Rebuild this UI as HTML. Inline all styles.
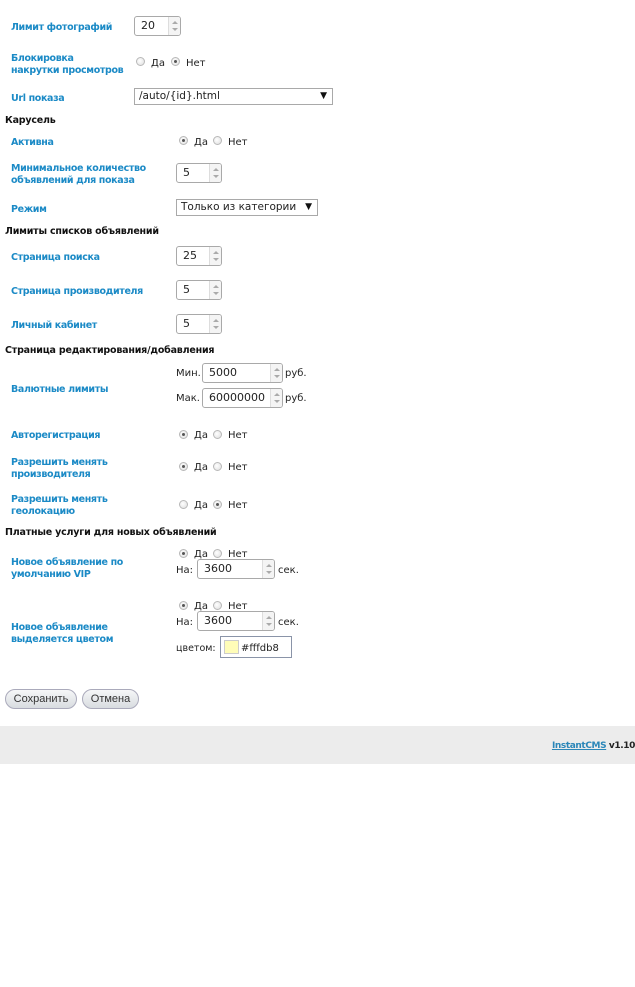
<!DOCTYPE html>
<html><head><meta charset="utf-8"><style>
*{margin:0;padding:0;box-sizing:border-box}
body{width:635px;height:987px;background:#fff;position:relative;font-family:"DejaVu Sans","Liberation Sans",sans-serif;font-size:10px;color:#222;overflow:hidden}
.a{position:absolute;white-space:nowrap;line-height:12px;margin-top:2px}
.l{color:#1b8ac6;font-weight:bold;font-size:9.5px;letter-spacing:-0.35px}
.h{font-weight:bold;color:#111;font-size:9.5px;letter-spacing:-0.2px}
.inp{position:absolute;border:1px solid #a9a9a9;border-radius:3px;background:#fff;font-size:11px;line-height:18px;padding-left:6px;overflow:hidden}
.inp .sp{position:absolute;right:0;top:0;bottom:0;width:12px;border-left:1px solid #ddd;background:#f4f4f4}
.inp .sp:before{content:"";position:absolute;left:3px;top:4px;border:3px solid transparent;border-bottom:3px solid #aaa;border-top:0}
.inp .sp:after{content:"";position:absolute;left:3px;bottom:4px;border:3px solid transparent;border-top:3px solid #aaa;border-bottom:0}
.sel{position:absolute;border:1px solid #a9a9a9;background:#fff;font-size:10.5px;line-height:15px;padding-left:4px}
.sel:after{content:"▼";position:absolute;right:5px;top:0;font-size:9px;color:#111}
.r{position:absolute;width:9px;height:9px;border-radius:50%;border:1px solid #b8b8b8;background:radial-gradient(circle at 40% 40%,#fff,#ddd)}
.r.on:after{content:"";position:absolute;left:2px;top:2px;width:3px;height:3px;border-radius:50%;background:#555}
.btn{position:absolute;height:20px;border:1px solid #aab;border-radius:10px;background:linear-gradient(#f6f7f8,#d8dce0);color:#333;font-size:11px;line-height:18px;text-align:center;font-family:"Liberation Sans",sans-serif}
</style></head><body>

<div class="a l" style="left:11px;top:20px">Лимит фотографий</div>
<div class="inp" style="left:134px;top:16px;width:47px;height:20px">20<div class="sp"></div></div>

<div class="a l" style="left:11px;top:51px">Блокировка<br>накрутки просмотров</div>
<div class="r" style="left:136px;top:57px"></div><div class="a" style="left:151px;top:56px">Да</div>
<div class="r on" style="left:171px;top:57px"></div><div class="a" style="left:186px;top:56px">Нет</div>

<div class="a l" style="left:11px;top:91px">Url показа</div>
<div class="sel" style="left:134px;top:88px;width:199px;height:17px">/auto/{id}.html</div>

<div class="a h" style="left:5px;top:113px">Карусель</div>
<div class="a l" style="left:11px;top:135px">Активна</div>
<div class="r on" style="left:179px;top:136px"></div><div class="a" style="left:194px;top:135px">Да</div>
<div class="r" style="left:213px;top:136px"></div><div class="a" style="left:228px;top:135px">Нет</div>

<div class="a l" style="left:11px;top:161px">Минимальное количество<br>объявлений для показа</div>
<div class="inp" style="left:176px;top:163px;width:46px;height:20px">5<div class="sp"></div></div>

<div class="a l" style="left:11px;top:202px">Режим</div>
<div class="sel" style="left:176px;top:199px;width:142px;height:17px">Только из категории</div>

<div class="a h" style="left:5px;top:224px">Лимиты списков объявлений</div>
<div class="a l" style="left:11px;top:250px">Страница поиска</div>
<div class="inp" style="left:176px;top:246px;width:46px;height:20px">25<div class="sp"></div></div>
<div class="a l" style="left:11px;top:284px">Страница производителя</div>
<div class="inp" style="left:176px;top:280px;width:46px;height:20px">5<div class="sp"></div></div>
<div class="a l" style="left:11px;top:318px">Личный кабинет</div>
<div class="inp" style="left:176px;top:314px;width:46px;height:20px">5<div class="sp"></div></div>

<div class="a h" style="left:5px;top:343px">Страница редактирования/добавления</div>
<div class="a l" style="left:11px;top:382px">Валютные лимиты</div>
<div class="a" style="left:176px;top:366px">Мин.</div>
<div class="inp" style="left:202px;top:363px;width:81px;height:20px">5000<div class="sp"></div></div>
<div class="a" style="left:285px;top:366px">руб.</div>
<div class="a" style="left:176px;top:391px">Мак.</div>
<div class="inp" style="left:202px;top:388px;width:81px;height:20px">60000000<div class="sp"></div></div>
<div class="a" style="left:285px;top:391px">руб.</div>

<div class="a l" style="left:11px;top:428px">Авторегистрация</div>
<div class="r on" style="left:179px;top:430px"></div><div class="a" style="left:194px;top:428px">Да</div>
<div class="r" style="left:213px;top:430px"></div><div class="a" style="left:228px;top:428px">Нет</div>

<div class="a l" style="left:11px;top:455px">Разрешить менять<br>производителя</div>
<div class="r on" style="left:179px;top:462px"></div><div class="a" style="left:194px;top:460px">Да</div>
<div class="r" style="left:213px;top:462px"></div><div class="a" style="left:228px;top:460px">Нет</div>

<div class="a l" style="left:11px;top:492px">Разрешить менять<br>геолокацию</div>
<div class="r" style="left:179px;top:500px"></div><div class="a" style="left:194px;top:498px">Да</div>
<div class="r on" style="left:213px;top:500px"></div><div class="a" style="left:228px;top:498px">Нет</div>

<div class="a h" style="left:5px;top:525px">Платные услуги для новых объявлений</div>
<div class="a l" style="left:11px;top:555px">Новое объявление по<br>умолчанию VIP</div>
<div class="r on" style="left:179px;top:549px"></div><div class="a" style="left:194px;top:547px">Да</div>
<div class="r" style="left:213px;top:549px"></div><div class="a" style="left:228px;top:547px">Нет</div>
<div class="a" style="left:176px;top:563px">На:</div>
<div class="inp" style="left:197px;top:559px;width:78px;height:20px">3600<div class="sp"></div></div>
<div class="a" style="left:278px;top:563px">сек.</div>

<div class="a l" style="left:11px;top:620px">Новое объявление<br>выделяется цветом</div>
<div class="r on" style="left:179px;top:601px"></div><div class="a" style="left:194px;top:599px">Да</div>
<div class="r" style="left:213px;top:601px"></div><div class="a" style="left:228px;top:599px">Нет</div>
<div class="a" style="left:176px;top:615px">На:</div>
<div class="inp" style="left:197px;top:611px;width:78px;height:20px">3600<div class="sp"></div></div>
<div class="a" style="left:278px;top:615px">сек.</div>
<div class="a" style="left:176px;top:641px;font-size:9.5px">цветом:</div>
<div style="position:absolute;left:220px;top:636px;width:72px;height:22px;border:1px solid #8a94a8;background:#fff"></div>
<div style="position:absolute;left:224px;top:640px;width:15px;height:14px;border:1px solid #ccc;background:#fffdb8"></div>
<div class="a" style="left:241px;top:641px">#fffdb8</div>

<div class="btn" style="left:5px;top:689px;width:72px">Сохранить</div>
<div class="btn" style="left:82px;top:689px;width:57px">Отмена</div>

<div style="position:absolute;left:0;top:726px;width:635px;height:38px;background:#ececec"></div>
<div class="a" style="right:0;top:738px;font-size:9px;font-weight:bold;letter-spacing:-0.4px"><span style="color:#2a86b8;text-decoration:underline">InstantCMS</span> <span style="color:#222">v1.10</span></div>
</body></html>
